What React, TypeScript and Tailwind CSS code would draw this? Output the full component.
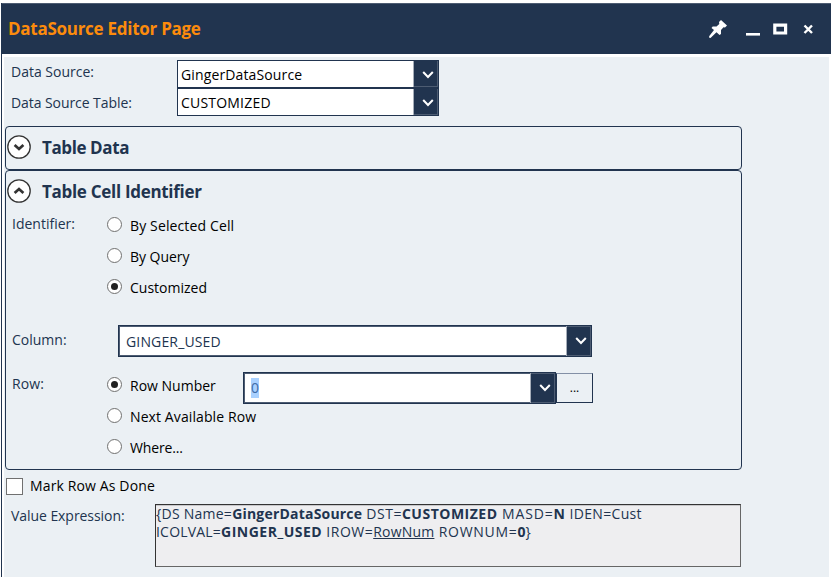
import type { ReactNode } from 'react';

function Chevron() {
  return (
    <svg width="12" height="8" viewBox="0 0 12 8" fill="none" stroke="#fff" strokeWidth="2">
      <path d="M1.2 1 6 6 10.8 1" />
    </svg>
  );
}

function SmallCombo({ children }: { children: ReactNode }) {
  return (
    <div className="flex h-7 w-[262px] border border-[#21344f] bg-white text-black">
      <div className="flex-1 pt-[4px] pl-[3px] leading-5">{children}</div>
      <div className="flex w-[25px] justify-center border-l border-[#a5adb9] bg-[#21344f] pt-[10px] pl-[4px] shadow-[inset_-1px_-1px_0_#4d5c72]">
        <Chevron />
      </div>
    </div>
  );
}

function LargeCombo({ width, children }: { width: string; children: ReactNode }) {
  return (
    <div className={`flex h-8 border border-[#21344f] bg-white ring-1 ring-inset ring-[#4d5c72] ${width}`}>
      <div className="flex-1 pt-[6px] pl-[7px] leading-5">{children}</div>
      <div className="flex w-[25px] justify-center border-l border-[#a5adb9] bg-[#21344f] pt-[11px] pl-[4px] shadow-[inset_-1px_-1px_0_#4d5c72,inset_0_1px_0_#4d5c72]">
        <Chevron />
      </div>
    </div>
  );
}

function Radio({ checked, children }: { checked?: boolean; children: ReactNode }) {
  return (
    <div className="flex h-[31px] items-start text-black">
      <span className="flex size-[15px] shrink-0 items-center justify-center rounded-full border border-[#707070] bg-white">
        {checked && <span className="size-[7px] rounded-full bg-[#212121]" />}
      </span>
      <span className="-mt-[1px] ml-[8px] whitespace-nowrap leading-5">{children}</span>
    </div>
  );
}

function Toggle({ open }: { open?: boolean }) {
  return (
    <svg width="25" height="25" viewBox="0 0 25 25" fill="none">
      <circle cx="12" cy="12" r="11.2" fill="#fff" stroke="#333" strokeWidth="1.3" />
      <path d={open ? 'M7.6 14 12 10 16.4 14' : 'M7.6 10 12 14 16.4 10'} stroke="#333" strokeWidth="2.7" />
    </svg>
  );
}

export default function App() {
  return (
    <div className="h-[577px] w-[831px] overflow-hidden bg-white pt-[3px] pl-px font-['Open_Sans','Noto_Sans',sans-serif] text-[14px] text-[#21344f]">
      <div className="flex h-[574px] flex-col border-l border-[#21344f]">
        <header className="flex h-[51px] shrink-0 bg-[#21344f] pl-[6px] shadow-[inset_0_1px_0_#4d5c72]">
          <h1 className="w-[697px] pt-[14px] text-[17px] leading-6 font-bold tracking-[-0.27px] whitespace-nowrap text-[#fc8b0c]">DataSource Editor Page</h1>
          <svg width="110" height="24" viewBox="705 17 110 24" className="mt-[14px]" fill="#fff">
            <path d="M721 20 727 25.5 725 27.5 723.5 27.3 721 30 721 34 719.5 35 716.5 32.3 710.5 38 709 37.5 709.3 36 714 30 711.5 28 712.7 26.6 716.5 26.5 719.3 24 719 22Z" />
            <path d="M746 33h14v2.6h-14z" />
            <path d="M774.8 25.2h10.8v7.8h-10.8z" fill="none" stroke="#fff" strokeWidth="3.2" />
            <path d="m804.5 25.5 7.5 7.5m0-7.5-7.5 7.5" stroke="#fff" strokeWidth="2.4" />
          </svg>
        </header>
        <main className="mt-[3px] mr-[2px] ml-[2px] flex-1 bg-[#ebf0f4] pt-[3px]">
          <section className="flex h-[66px] pl-[7px]">
            <div className="w-[166px] pt-[2px] leading-5">
              <div className="h-[31px]">Data Source:</div>
              <div className="tracking-[-0.07px]">Data Source Table:</div>
            </div>
            <div>
              <SmallCombo><span className="tracking-[0.13px]">GingerDataSource</span></SmallCombo>
              <SmallCombo><span className="tracking-[0.2px]">CUSTOMIZED</span></SmallCombo>
            </div>
          </section>
          <section className="ml-px flex h-11 w-[737px] rounded-[4px] border border-[#21344f] pt-[8px] pl-px">
            <Toggle />
            <h2 className="mt-px ml-[10px] text-[17px] leading-6 font-bold tracking-[-0.4px]">Table Data</h2>
          </section>
          <section className="ml-px h-[300px] w-[737px] rounded-[4px] border border-[#21344f]">
            <div className="flex h-[46px] pt-[8px] pl-px">
              <Toggle open />
              <h2 className="mt-px ml-[10px] text-[17px] leading-6 font-bold tracking-[-0.3px]">Table Cell Identifier</h2>
            </div>
            <div className="flex h-[108px] pl-[6px]">
              <div className="-mt-[3px] w-[95px] leading-5">Identifier:</div>
              <div>
                <Radio><span className="tracking-[0.13px]">By Selected Cell</span></Radio>
                <Radio><span className="tracking-[-0.05px]">By Query</span></Radio>
                <Radio checked>Customized</Radio>
              </div>
            </div>
            <div className="flex h-[47px] pl-[6px]">
              <div className="w-[106px] pt-[5px] leading-5">Column:</div>
              <LargeCombo width="w-[474px]"><span className="tracking-[0.15px]">GINGER_USED</span></LargeCombo>
            </div>
            <div className="flex pl-[6px]">
              <div className="w-[95px] pt-[2px] leading-5 tracking-[0.1px]">Row:</div>
              <div className="w-[136px] pt-[5px]">
                <Radio checked>Row Number</Radio>
                <Radio><span className="tracking-[0.1px]">Next Available Row</span></Radio>
                <Radio><span className="tracking-[-0.15px]">Where...</span></Radio>
              </div>
              <LargeCombo width="w-[313px]"><span className="-mt-px block w-2 bg-[#a9d1ff] text-[#3f6ca8]">0</span></LargeCombo>
              <div className="mt-px flex h-[30px] w-[37px] justify-center border border-[#21344f] border-t-[#8390a6] pt-[4px] text-[12px] leading-5 text-black">...</div>
            </div>
          </section>
          <section className="flex h-[34px] pt-[8px] pl-[2px] text-black">
            <span className="size-[17px] border border-[#707070] bg-white" />
            <span className="-mt-[2px] ml-[7px] leading-5 tracking-[0.13px]">Mark Row As Done</span>
          </section>
          <section className="flex pl-[7px]">
            <div className="w-[144px] pt-[2px] leading-5 tracking-[-0.06px]">Value Expression:</div>
            <div className="h-[63px] w-[586px] border border-[#333] border-r-[#666] border-b-[#666] bg-[#eeeef0] leading-[18px] whitespace-nowrap shadow-[inset_0_1px_0_#c8c8ca]">
              <div className="tracking-[0.5px]">
                <span className="tracking-[0.25px]">{'{DS Name='}</span>
                <b className="tracking-[0.2px]">GingerDataSource</b> DST=<b>CUSTOMIZED</b>
                <span className="tracking-[0.85px]"> MASD=</span>
                <b>N</b>
                <span className="tracking-[0.33px]"> IDEN=Cust</span>
              </div>
              <div className="tracking-[0.5px]">
                <span className="tracking-[0.2px]">ICOLVAL=</span>
                <b>GINGER_USED</b> IROW=<u className="tracking-[0.2px]">RowNum</u>
                <span className="tracking-[0.7px]"> ROWNUM=</span>
                <b className="tracking-normal">0</b>
                {'}'}
              </div>
            </div>
          </section>
        </main>
      </div>
    </div>
  );
}
